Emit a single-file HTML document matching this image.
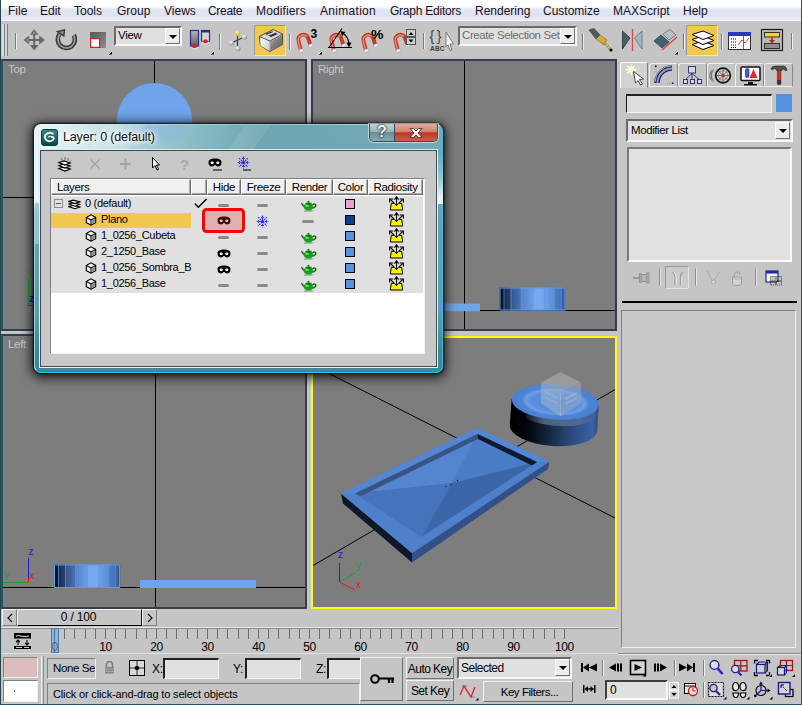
<!DOCTYPE html>
<html><head><meta charset="utf-8">
<style>
*{margin:0;padding:0;box-sizing:border-box}
html,body{width:802px;height:705px;overflow:hidden;background:#c5c5c5;font-family:"Liberation Sans",sans-serif;font-size:12px;color:#000}
.a{position:absolute}
#menubar{left:0;top:0;width:802px;height:20px;background:linear-gradient(#ffffff 0,#fbfcfe 35%,#e3e7f3 45%,#dde2f0 80%,#eef0f8 100%)}
#menubar span{position:absolute;top:4px;font-size:12px;color:#1a1020;white-space:nowrap}
#toolbar{left:0;top:20px;width:802px;height:39px;background:#c5c5c5;border-top:1px solid #f4f4f4}
.vp{background:#7d7d7d;border:2px solid #353d4e;overflow:hidden}
.vplabel{position:absolute;left:5px;top:2px;font-size:11.5px;letter-spacing:-0.3px;color:#c6c6c6}

.sunk{border:1px solid;border-color:#404040 #fff #fff #404040;background:#dcdcdc}
.raised{border:1px solid;border-color:#fff #6e6e6e #6e6e6e #fff;background:#c5c5c5}
.btn{border:1px solid;border-color:#f4f4f4 #707070 #707070 #f4f4f4;background:#c5c5c5;text-align:center;font-size:11px;white-space:nowrap}
.t11{font-size:11px;white-space:nowrap}
.sep{position:absolute;width:2px;border-left:1px solid #808080;border-right:1px solid #f0f0f0}
.tab{top:1px;width:29px;height:24px;border:1px solid;border-color:#f0f0f0 #8a8a8a #f0f0f0 #f0f0f0;border-radius:3px 3px 0 0;background:#c5c5c5}

#dlg{border-radius:7px;box-shadow:0 2px 11px 3px rgba(0,0,0,.78),0 0 2px 1px rgba(0,0,0,.8);background:linear-gradient(180deg,#76acb6 0,#74aab6 26px,#6aa4b0 90px,#5c9cab 190px,#3f8898 226px,#3f8898 100%);
 border:1px solid;border-color:#a8dce8 #30c4ec #22c2ec #b4dce6}
#dlg .lite{position:absolute;left:-1px;top:-1px;width:411px;height:120px;border-radius:7px 7px 0 0;background:linear-gradient(90deg,rgba(238,249,251,.97) 0,rgba(218,238,242,.92) 12%,rgba(165,208,216,.72) 32%,rgba(95,155,168,.35) 55%,rgba(70,135,150,0) 100%);-webkit-mask-image:linear-gradient(180deg,#000 0,#000 78px,rgba(0,0,0,.4) 80px,rgba(0,0,0,.3) 170px,transparent 235px);mask-image:linear-gradient(180deg,#000 0,#000 78px,rgba(0,0,0,.4) 80px,rgba(0,0,0,.3) 170px,transparent 235px)}
#dlg .glass{position:absolute;left:0;top:0;right:0;height:26px;border-radius:6px 6px 0 0;overflow:hidden}
#dlg .client{position:absolute;left:4px;top:24px;width:399px;height:219px;border:1px solid;border-color:#d8eef2 #e8f4f6 #e8f4f6 #e0f0f4}
#dlg .client>div{position:absolute;left:0;top:0;width:397px;height:217px;background:#c8c8c8;border:1px solid #3c4c54}
.hdr{position:absolute;top:0;height:16px;background:#f0f0f0;border:1px solid;border-color:#fff #6e6e6e #6e6e6e #fff;font-size:11.5px;text-align:center;line-height:14px;letter-spacing:-0.35px;box-shadow:inset -1px -1px 0 #a8a8a8}
.row{position:absolute;left:0;width:372px;height:16px}
.row span{position:absolute;top:-1px;font-size:11px;letter-spacing:-0.3px;white-space:nowrap;line-height:15px}
</style></head><body>
<div class="a" style="left:0;top:0;width:1px;height:705px;background:#24464e;z-index:9"></div>
<div class="a" style="left:800.5px;top:0;width:1.5px;height:705px;background:#2c5460;z-index:9"></div><div class="a" style="left:0;top:704px;width:802px;height:1px;background:#2c5460;z-index:9"></div>
<!-- MENUBAR -->
<div id="menubar" class="a">
<span style="left:8px">File</span><span style="left:40px">Edit</span><span style="left:74px">Tools</span><span style="left:117px">Group</span><span style="left:164px">Views</span><span style="left:208px;letter-spacing:-0.3px">Create</span><span style="left:256px;letter-spacing:0.13px">Modifiers</span><span style="left:320px;letter-spacing:0.3px">Animation</span><span style="left:390px;letter-spacing:-0.23px">Graph Editors</span><span style="left:475px">Rendering</span><span style="left:543px">Customize</span><span style="left:613px">MAXScript</span><span style="left:683px">Help</span>
</div>
<!-- TOOLBAR -->
<div id="toolbar" class="a">
 <div class="a" style="left:114px;top:5px;width:68px;height:20px;background:#e0e0e0;border:2px solid;border-color:#6a6a6a #f8f8f8 #f8f8f8 #6a6a6a"><span class="a" style="left:2px;top:1px;font-size:11.5px;letter-spacing:-0.3px">View</span>
  <div class="a" style="left:49px;top:0px;width:15px;height:16px;background:#ececec;border:1px solid;border-color:#fff #707070 #707070 #fff"><div class="a" style="left:3px;top:6px;border:4px solid transparent;border-top:4px solid #000;border-bottom:0"></div></div></div>
 <div class="a" style="left:458px;top:5px;width:119px;height:20px;background:#e0e0e0;border:2px solid;border-color:#6a6a6a #f8f8f8 #f8f8f8 #6a6a6a"><span class="a" style="left:2px;top:1px;font-size:11.5px;letter-spacing:-0.4px;color:#6e6e6e;white-space:nowrap">Create Selection Set</span>
  <div class="a" style="left:100px;top:0px;width:15px;height:16px;background:#ececec;border:1px solid;border-color:#fff #707070 #707070 #fff"><div class="a" style="left:3px;top:6px;border:4px solid transparent;border-top:4px solid #000;border-bottom:0"></div></div></div>
</div>
<svg class="a" style="left:0;top:0;z-index:2" width="802" height="60" id="tbsvg">
<defs>
<linearGradient id="gm" x1="0" y1="0" x2="1" y2="1"><stop offset="0" stop-color="#9a9a9a"/><stop offset="1" stop-color="#484848"/></linearGradient>
<linearGradient id="gs" x1="0" y1="0" x2="1" y2="1"><stop offset="0" stop-color="#585858"/><stop offset="1" stop-color="#8e8e8e"/></linearGradient>
<linearGradient id="bxl" x1="0" y1="0" x2="1" y2="1"><stop offset="0" stop-color="#fff"/><stop offset="1" stop-color="#c8c8c8"/></linearGradient><linearGradient id="bxr" x1="0" y1="0" x2="1" y2="1"><stop offset="0" stop-color="#a0a0a0"/><stop offset="1" stop-color="#585858"/></linearGradient><linearGradient id="rcl" x1="0" y1="0" x2="0" y2="1"><stop offset="0" stop-color="#b4b4b8"/><stop offset="1" stop-color="#585860"/></linearGradient><radialGradient id="ball" cx=".35" cy=".35" r=".7"><stop offset="0" stop-color="#fff"/><stop offset="1" stop-color="#8a8a8a"/></radialGradient>
<radialGradient id="yball" cx=".35" cy=".35" r=".7"><stop offset="0" stop-color="#fff8a0"/><stop offset="1" stop-color="#d8b800"/></radialGradient>
</defs>
<!-- gripper -->
<path d="M3 24 V56 M6 24 V56" stroke="#f4f4f4"/><path d="M4.5 24 V56 M7.4 24 V56" stroke="#777"/>
<path d="M15.5 33 V49" stroke="#7c7c7c"/><path d="M16.5 33 V49" stroke="#ececec"/>
<!-- move -->
<g fill="#666" stroke="none"><rect x="33.2" y="32" width="2" height="16"/><rect x="26" y="39" width="16.5" height="2"/><path d="M34.2 29.2 L38.6 34.8 H29.8 Z M34.2 50.6 L38.6 45 H29.8 Z M23.5 40 L29.2 35.6 V44.4 Z M44.9 40 L39.2 35.6 V44.4 Z"/></g><g fill="#8c8c8c"><path d="M34.2 31 L36.5 34 H32 Z M25.5 40 L28.4 37.8 V42.2 Z"/></g>
<!-- rotate -->
<path d="M73.8 35 A8.6 8.6 0 1 1 59.5 34.2" fill="none" stroke="#383838" stroke-width="4.6"/><path d="M73.6 35.3 A8.4 8.4 0 1 1 59.8 34.4" fill="none" stroke="#9c9c9c" stroke-width="1.7"/><path d="M55.8 31.3 L65.3 29 L64.4 37.2 Z" fill="#383838"/><path d="M59 32 L63.8 30.7 L63.3 34.5 Z" fill="#8a8a8a"/>
<!-- scale -->
<rect x="90" y="32" width="16" height="16" fill="url(#gs)"/><rect x="90.6" y="38.6" width="9" height="8.8" fill="#fff" stroke="#d82020" stroke-width="1.2"/>
<path d="M112 51 v3.5 h-3.5 z" fill="#000"/><path d="M108.5 54.5 l3.5 -3.5" stroke="#fff" stroke-width=".9"/>
<!-- ref coord pair -->
<rect x="190.5" y="30.5" width="8" height="16" fill="url(#rcl)" stroke="#283080" stroke-width="1.2"/><rect x="201.5" y="30.5" width="8" height="11" fill="#d4d4dc" stroke="#283080" stroke-width="1.2"/><rect x="201.5" y="30.5" width="8" height="2" fill="#283080"/><circle cx="194.5" cy="46" r="2.2" fill="#e02020"/><circle cx="205.5" cy="41.5" r="2.2" fill="#e02020"/><path d="M190.5 46.5 q4 5 8 0 M201.5 41.5 q4 5 8 0" fill="none" stroke="#e4e4ec" stroke-width="1.1"/>
<path d="M214 51 v3.5 h-3.5 z" fill="#000"/><path d="M210.5 54.5 l3.5 -3.5" stroke="#fff" stroke-width=".9"/>
<path d="M219.5 33 V49" stroke="#7c7c7c"/><path d="M220.5 33 V49" stroke="#ececec"/>
<!-- pivot -->
<path d="M237.5 33 V48 M231 43 L238 40 L244 37" stroke="#404040" stroke-width="1.2" fill="none"/><circle cx="237.5" cy="33" r="2.8" fill="url(#yball)"/><circle cx="231.5" cy="43" r="2.6" fill="url(#ball)"/><circle cx="244.5" cy="37" r="2.6" fill="url(#ball)"/><circle cx="238" cy="48.5" r="2.6" fill="url(#ball)"/>
<!-- select&manip highlighted -->
<rect x="254.5" y="25.5" width="31" height="30" fill="#f0c84c" stroke="#e4e4e4"/><path d="M254.5 55.5 V25.5 H285.5" fill="none" stroke="#9a9a9a"/>
<g transform="translate(271.5 40.5) scale(1.16) translate(-271.5 -40.5)"><path d="M261 37 L273 31 L281 35 L281 44 L270 50 L262 45 Z" fill="#d8d8d8" stroke="#404040" stroke-width=".8"/><path d="M261 37 L270 41 L281 35 M270 41 V50" fill="none" stroke="#404040" stroke-width=".8"/><path d="M262 38 L270 41.5 V49.5 L262 45 Z" fill="url(#bxl)"/><path d="M270.5 41.5 L280.5 36 V44 L270.5 49.5 Z" fill="url(#bxr)"/><path d="M266 35 L272 32.5 L277 35 L271 37.5 Z" fill="#303030"/><path d="M268 36 L274 33.5" stroke="#fff" stroke-width="1"/></g>
<path d="M289.5 33 V49" stroke="#7c7c7c"/><path d="M290.5 33 V49" stroke="#ececec"/>
<g transform="translate(296,33)"><path d="M5 17.5 L2.6 8.5 A5 5 0 0 1 12 4.8 L14.6 12.3" fill="none" stroke="#c8382a" stroke-width="3.9"/><path d="M4.3 16 L2.2 8.2 A5.3 5.3 0 0 1 11 3.5" fill="none" stroke="#f09080" stroke-width="1.3"/><rect x="3.3" y="16.3" width="3.8" height="2.6" fill="#fff" stroke="#999" stroke-width=".4" transform="rotate(-15 5 17.5)"/><rect x="12.9" y="11.2" width="3.8" height="2.6" fill="#fff" stroke="#999" stroke-width=".4" transform="rotate(-18 14.6 12.3)"/></g><text x="310.5" y="38" font-family="Liberation Sans" font-weight="bold" font-size="12">3</text>
<path d="M322 51 v3.5 h-3.5 z" fill="#000"/><path d="M318.5 54.5 l3.5 -3.5" stroke="#fff" stroke-width=".9"/>
<g transform="translate(329,33)"><path d="M5 17.5 L2.6 8.5 A5 5 0 0 1 12 4.8 L14.6 12.3" fill="none" stroke="#c8382a" stroke-width="3.9"/><path d="M4.3 16 L2.2 8.2 A5.3 5.3 0 0 1 11 3.5" fill="none" stroke="#f09080" stroke-width="1.3"/><rect x="3.3" y="16.3" width="3.8" height="2.6" fill="#fff" stroke="#999" stroke-width=".4" transform="rotate(-15 5 17.5)"/><rect x="12.9" y="11.2" width="3.8" height="2.6" fill="#fff" stroke="#999" stroke-width=".4" transform="rotate(-18 14.6 12.3)"/></g><path d="M328 47.5 H352 M329 47.5 L342 28.5" stroke="#000" stroke-width="1.1" fill="none"/><path d="M342 32.5 Q349 37 349 45" fill="none" stroke="#000" stroke-width="1.1"/><path d="M340 31 L345.5 32 L342.3 36 Z M346.5 42.5 L351.5 42.5 L349 47.5 Z" fill="#000"/>
<g transform="translate(361,33)"><path d="M5 17.5 L2.6 8.5 A5 5 0 0 1 12 4.8 L14.6 12.3" fill="none" stroke="#c8382a" stroke-width="3.9"/><path d="M4.3 16 L2.2 8.2 A5.3 5.3 0 0 1 11 3.5" fill="none" stroke="#f09080" stroke-width="1.3"/><rect x="3.3" y="16.3" width="3.8" height="2.6" fill="#fff" stroke="#999" stroke-width=".4" transform="rotate(-15 5 17.5)"/><rect x="12.9" y="11.2" width="3.8" height="2.6" fill="#fff" stroke="#999" stroke-width=".4" transform="rotate(-18 14.6 12.3)"/></g><text x="371" y="38.5" font-family="Liberation Sans" font-weight="bold" font-size="12.5" textLength="12.5" lengthAdjust="spacingAndGlyphs">%</text>
<g transform="translate(393,33)"><path d="M5 17.5 L2.6 8.5 A5 5 0 0 1 12 4.8 L14.6 12.3" fill="none" stroke="#c8382a" stroke-width="3.9"/><path d="M4.3 16 L2.2 8.2 A5.3 5.3 0 0 1 11 3.5" fill="none" stroke="#f09080" stroke-width="1.3"/><rect x="3.3" y="16.3" width="3.8" height="2.6" fill="#fff" stroke="#999" stroke-width=".4" transform="rotate(-15 5 17.5)"/><rect x="12.9" y="11.2" width="3.8" height="2.6" fill="#fff" stroke="#999" stroke-width=".4" transform="rotate(-18 14.6 12.3)"/></g><rect x="406.5" y="29.5" width="9" height="7" fill="#d0d0d0" stroke="#555"/><rect x="406.5" y="37.5" width="9" height="7" fill="#d0d0d0" stroke="#555"/><path d="M408.5 35 L411 32 L413.5 35 Z M408.5 39.5 L411 42.5 L413.5 39.5 Z" fill="#000"/>
<path d="M423.5 33 V49" stroke="#7c7c7c"/><path d="M424.5 33 V49" stroke="#ececec"/>
<!-- {} ABC -->
<text x="429.5" y="41" font-family="Liberation Sans" font-size="14.5" fill="#484848" letter-spacing="-0.8">{ }</text><text x="430" y="51" font-family="Liberation Sans" font-weight="bold" font-size="6.5" fill="#404040" letter-spacing=".2">ABC</text>
<!-- cursor -->
<path d="M446 32 L453.5 44 L450 44 L452 50 L450 50.5 L448 45 L446 47 Z" fill="#f4f4f4" stroke="#7a7a7a" stroke-width="1"/>
<path d="M582.5 33 V49" stroke="#7c7c7c"/><path d="M583.5 33 V49" stroke="#ececec"/>
<!-- light lister / flashlight -->
<path d="M589 30 L594 28.5 L600 35 L596 39 Z" fill="#505860" stroke="#303030" stroke-width=".6"/><path d="M596 39 L600 35 L607 40 L604 45 Z" fill="#d8a838" stroke="#705010" stroke-width=".5"/><path d="M604 42 L610 49" stroke="#b89030" stroke-width="3" stroke-dasharray="1.5 1"/><circle cx="611" cy="50" r="1.6" fill="#000"/>
<!-- mirror -->
<path d="M622.5 31 L630 38 L622.5 49 Z" fill="#4a6068" stroke="#203038" stroke-width=".8"/><path d="M642 31 L634.5 38 L642 49 Z" fill="#a8b4bc" stroke="#607078" stroke-width=".8"/><path d="M632.5 29 V51" stroke="#e04848" stroke-width="1.3"/>
<!-- align -->
<path d="M654 41 L661 35 L669 42 L662 48 Z" fill="#3e6470" stroke="#203840" stroke-width=".7"/><path d="M663 34 L670 29.5 L676 35 L669 40 Z" fill="#b8c0cc" stroke="#506070" stroke-width=".7"/><path d="M662 50 L677 37" stroke="#e04040" stroke-width="1.4"/>
<path d="M678 51 v3.5 h-3.5 z" fill="#000"/><path d="M674.5 54.5 l3.5 -3.5" stroke="#fff" stroke-width=".9"/>
<path d="M683.5 33 V49" stroke="#7c7c7c"/><path d="M684.5 33 V49" stroke="#ececec"/>
<!-- layers highlighted -->
<rect x="686.5" y="25.5" width="31" height="30" fill="#f0c84c" stroke="#e4e4e4"/><path d="M686.5 55.5 V25.5 H717.5" fill="none" stroke="#9a9a9a"/>
<g fill="#fff" stroke="#000" stroke-width="1"><path d="M692 44.5 L703 41 L714 45.5 L703 49.5 Z"/><path d="M692 39.5 L703 36 L714 40.5 L703 44.5 Z"/><path d="M692 34.5 L703 31 L714 35.5 L703 39.5 Z"/></g>
<path d="M721.5 33 V49" stroke="#7c7c7c"/><path d="M722.5 33 V49" stroke="#ececec"/>
<!-- curve editor -->
<rect x="728.5" y="32.5" width="22" height="17" fill="#fff" stroke="#303030"/><rect x="728.5" y="32.5" width="22" height="3" fill="#2838c0" stroke="#2838c0"/><path d="M731 39 H736 M731 42 H736 M731 45 H736 M731 47.5 H736" stroke="#000" stroke-width="1" stroke-dasharray="1 1"/><path d="M738 45 L742 40 L745 43 L749 38" fill="none" stroke="#d04040" stroke-width="1"/><path d="M743.5 36 V49" stroke="#20a020"/>
<!-- schematic -->
<rect x="761.5" y="29.5" width="21" height="21" fill="#b8b8b8" stroke="#202020" stroke-width="1.2"/><rect x="764.5" y="32.5" width="15" height="4.5" fill="#f0d820" stroke="#303030"/><rect x="764.5" y="43.5" width="15" height="5" fill="#909090" stroke="#303030"/><path d="M772 37 V41" stroke="#c02020" stroke-width="1.6"/><path d="M769 40 H775 L772 43.5 Z" fill="#c02020"/>
<path d="M791.5 33 V49" stroke="#7c7c7c"/><path d="M792.5 33 V49" stroke="#ececec"/>
</svg>
<!-- VIEWPORTS -->
<div id="vtop" class="a vp" style="left:1px;top:59px;width:306px;height:272px;border-left-color:#2c5562"><svg class="a" style="left:0;top:0" width="302" height="268" viewBox="3 61 302 268">
<path d="M154.5 61 V329 M3 197.5 H305" stroke="#000" stroke-width="1"/>
<circle cx="154.5" cy="120.7" r="37.7" fill="#6fa3ea"/>
<path d="M28.5 278 V305" stroke="#20a020" stroke-width="1"/><text x="28" y="276" font-family="Liberation Sans" font-size="10" fill="#20a020">y</text><text x="29" y="302" font-family="Liberation Sans" font-size="10" font-weight="bold" fill="#2020d0">z</text><path d="M28 305.5 H34" stroke="#d02020"/>
</svg><div class="vplabel">Top</div></div>
<div id="vright" class="a vp" style="left:311px;top:59px;width:306px;height:272px"><svg class="a" style="left:0;top:0" width="302" height="268" viewBox="313 61 302 268">
<path d="M464.5 61 V329 M313 310.5 H615" stroke="#000" stroke-width="1"/>
<rect x="400" y="303.5" width="80" height="7.7" fill="#6ea4ea"/>
<defs><linearGradient id="cr0" x1="0" x2="1" y1="0" y2="0"><stop offset="0" stop-color="#080e18"/><stop offset="1" stop-color="#0e1624"/></linearGradient><linearGradient id="cr1" x1="0" x2="1" y1="0" y2="0"><stop offset="0" stop-color="#1a2a48"/><stop offset="1" stop-color="#2c4470"/></linearGradient><linearGradient id="cr2" x1="0" x2="1" y1="0" y2="0"><stop offset="0" stop-color="#34558c"/><stop offset="1" stop-color="#4a72b6"/></linearGradient><linearGradient id="cr3" x1="0" x2="1" y1="0" y2="0"><stop offset="0" stop-color="#5682c8"/><stop offset="1" stop-color="#6c9ee6"/></linearGradient><linearGradient id="cr4" x1="0" x2="1" y1="0" y2="0"><stop offset="0" stop-color="#74a8f0"/><stop offset="1" stop-color="#74a8f0"/></linearGradient><linearGradient id="cr5" x1="0" x2="1" y1="0" y2="0"><stop offset="0" stop-color="#6ca0e8"/><stop offset="1" stop-color="#5a8cd6"/></linearGradient><linearGradient id="cr6" x1="0" x2="1" y1="0" y2="0"><stop offset="0" stop-color="#507ec4"/><stop offset="1" stop-color="#4470b2"/></linearGradient><linearGradient id="cr7" x1="0" x2="1" y1="0" y2="0"><stop offset="0" stop-color="#3c629e"/><stop offset="1" stop-color="#385a94"/></linearGradient></defs><rect x="499.50" y="287.5" width="4.70" height="23.0" fill="url(#cr0)"/><rect x="504.00" y="287.5" width="7.33" height="23.0" fill="url(#cr1)"/><rect x="511.12" y="287.5" width="10.20" height="23.0" fill="url(#cr2)"/><rect x="521.12" y="287.5" width="12.07" height="23.0" fill="url(#cr3)"/><rect x="533.00" y="287.5" width="11.45" height="23.0" fill="url(#cr4)"/><rect x="544.25" y="287.5" width="10.20" height="23.0" fill="url(#cr5)"/><rect x="554.25" y="287.5" width="7.08" height="23.0" fill="url(#cr6)"/><rect x="561.12" y="287.5" width="4.58" height="23.0" fill="url(#cr7)"/><path d="M504.00 287.5 V310.5" stroke="#5a96ec" stroke-width=".7"/><path d="M511.12 287.5 V310.5" stroke="#5a96ec" stroke-width=".7"/><path d="M521.12 287.5 V310.5" stroke="#5a96ec" stroke-width=".7"/><path d="M533.00 287.5 V310.5" stroke="#5a96ec" stroke-width=".7"/><path d="M544.25 287.5 V310.5" stroke="#5a96ec" stroke-width=".7"/><path d="M554.25 287.5 V310.5" stroke="#5a96ec" stroke-width=".7"/><path d="M561.12 287.5 V310.5" stroke="#5a96ec" stroke-width=".7"/><rect x="500.0" y="288.0" width="65.0" height="22.0" fill="none" stroke="#5a9af0" stroke-width="1"/>
</svg><div class="vplabel">Right</div></div>
<div id="vleft" class="a vp" style="left:1px;top:334px;width:306px;height:275px;border-left-color:#2c5562"><svg class="a" style="left:0;top:0" width="302" height="271" viewBox="3 336 302 271">
<path d="M155.5 336 V607 M3 587.5 H305" stroke="#000" stroke-width="1"/>
<rect x="140" y="580" width="116" height="8" fill="#6fa4ec"/>
<defs><linearGradient id="cl0" x1="0" x2="1" y1="0" y2="0"><stop offset="0" stop-color="#080e18"/><stop offset="1" stop-color="#0e1624"/></linearGradient><linearGradient id="cl1" x1="0" x2="1" y1="0" y2="0"><stop offset="0" stop-color="#1a2a48"/><stop offset="1" stop-color="#2c4470"/></linearGradient><linearGradient id="cl2" x1="0" x2="1" y1="0" y2="0"><stop offset="0" stop-color="#34558c"/><stop offset="1" stop-color="#4a72b6"/></linearGradient><linearGradient id="cl3" x1="0" x2="1" y1="0" y2="0"><stop offset="0" stop-color="#5682c8"/><stop offset="1" stop-color="#6c9ee6"/></linearGradient><linearGradient id="cl4" x1="0" x2="1" y1="0" y2="0"><stop offset="0" stop-color="#74a8f0"/><stop offset="1" stop-color="#74a8f0"/></linearGradient><linearGradient id="cl5" x1="0" x2="1" y1="0" y2="0"><stop offset="0" stop-color="#6ca0e8"/><stop offset="1" stop-color="#5a8cd6"/></linearGradient><linearGradient id="cl6" x1="0" x2="1" y1="0" y2="0"><stop offset="0" stop-color="#507ec4"/><stop offset="1" stop-color="#4470b2"/></linearGradient><linearGradient id="cl7" x1="0" x2="1" y1="0" y2="0"><stop offset="0" stop-color="#3c629e"/><stop offset="1" stop-color="#385a94"/></linearGradient></defs><rect x="54.00" y="564.5" width="4.70" height="23.5" fill="url(#cl0)"/><rect x="58.50" y="564.5" width="7.33" height="23.5" fill="url(#cl1)"/><rect x="65.62" y="564.5" width="10.20" height="23.5" fill="url(#cl2)"/><rect x="75.62" y="564.5" width="12.07" height="23.5" fill="url(#cl3)"/><rect x="87.50" y="564.5" width="11.45" height="23.5" fill="url(#cl4)"/><rect x="98.75" y="564.5" width="10.20" height="23.5" fill="url(#cl5)"/><rect x="108.75" y="564.5" width="7.08" height="23.5" fill="url(#cl6)"/><rect x="115.62" y="564.5" width="4.58" height="23.5" fill="url(#cl7)"/><path d="M58.50 564.5 V588" stroke="#5a96ec" stroke-width=".7"/><path d="M65.62 564.5 V588" stroke="#5a96ec" stroke-width=".7"/><path d="M75.62 564.5 V588" stroke="#5a96ec" stroke-width=".7"/><path d="M87.50 564.5 V588" stroke="#5a96ec" stroke-width=".7"/><path d="M98.75 564.5 V588" stroke="#5a96ec" stroke-width=".7"/><path d="M108.75 564.5 V588" stroke="#5a96ec" stroke-width=".7"/><path d="M115.62 564.5 V588" stroke="#5a96ec" stroke-width=".7"/><rect x="54.5" y="565.0" width="65" height="22.5" fill="none" stroke="#5a9af0" stroke-width="1"/>
<path d="M28.5 558 V582.5" stroke="#2020d0"/><path d="M3 582.5 H28.5" stroke="#20a020"/><path d="M28.5 578 v5" stroke="#d02020"/>
<text x="28.5" y="555" font-family="Liberation Sans" font-size="10" fill="#2020d0">z</text>
<text x="4" y="578" font-family="Liberation Sans" font-size="10" fill="#20a020">y</text>
<text x="29.5" y="579" font-family="Liberation Sans" font-size="10" fill="#d02020">x</text>
</svg><div class="vplabel">Left</div></div>
<div id="vpersp" class="a vp" style="left:311px;top:336px;width:306px;height:273px;border-color:#ffff00"><svg class="a" style="left:0;top:0" width="302" height="269" viewBox="313 338 302 269">
<defs>
<linearGradient id="bandg" x1="0" y1="0" x2="1" y2="0"><stop offset="0" stop-color="#506880" stop-opacity=".1"/><stop offset=".3" stop-color="#60788e" stop-opacity=".75"/><stop offset=".8" stop-color="#5c7698" stop-opacity=".7"/><stop offset="1" stop-color="#4868a0" stop-opacity=".2"/></linearGradient><linearGradient id="cb" x1="0" y1="0" x2="1" y2="0"><stop offset="0" stop-color="#000"/><stop offset=".2" stop-color="#03050a"/><stop offset=".38" stop-color="#101c30"/><stop offset=".6" stop-color="#223c66"/><stop offset=".85" stop-color="#345896"/><stop offset=".95" stop-color="#3a62a4"/><stop offset="1" stop-color="#2e4f86"/></linearGradient>
<radialGradient id="ct" cx=".5" cy=".5" r=".5"><stop offset="0" stop-color="#5088d8"/><stop offset=".55" stop-color="#5a90de"/><stop offset=".68" stop-color="#6c9ee4"/><stop offset=".78" stop-color="#4e84d4"/><stop offset="1" stop-color="#4a80d0"/></radialGradient>
</defs>
<!-- grid lines -->
<path d="M328 373 L619 520" stroke="#000" stroke-width="1"/>
<path d="M310 567.3 L618 387.8" stroke="#000" stroke-width="1"/>
<!-- cylinder -->
<g transform="rotate(4 555 402)">
<path d="M511.5 402 V428 A43.7 18 0 0 0 599 428 V402 Z" fill="url(#cb)"/>
<path d="M524 412 A43.7 17.6 0 0 0 596 409 L594 418 A43.7 17.6 0 0 1 528 421 Z" fill="url(#bandg)"/>
<ellipse cx="555.3" cy="402" rx="43.7" ry="17.6" fill="url(#ct)"/>
</g>
<!-- ghost cube -->
<g opacity=".55"><path d="M560.5 372 L581 382.5 L560.5 392.5 L541 382.5 Z" fill="#b4b4b4"/><path d="M541 382.5 L560.5 392.5 V416 L541 403.5 Z" fill="#a4b4cc"/><path d="M581 382.5 L560.5 392.5 V416 L581 403.5 Z" fill="#98a8c4"/><path d="M560.5 392.5 V416" stroke="#c8c8c8" stroke-width="1"/><path d="M545 392 L557 398 M545 397 L557 403 M565 399 L577 393 M565 404 L577 398" stroke="#b8c4d8" stroke-width="2"/></g>
<!-- tray -->
<path d="M341 493.5 L412 553 V562.5 L343 503.5 Z" fill="#0e1828"/>
<path d="M412 553 L549.5 461.5 L548 469 L412 562.5 Z" fill="#32508a"/>
<path d="M341 493.5 L477 428 L549.5 461.5 L412 553 Z" fill="#4e80cc"/><path d="M341 493.5 L477 428 L549.5 461.5 L537 462 L477.5 434 L355 493.5 Z" fill="#5486d2"/>
<!-- interior -->
<path d="M355 493.5 L477.5 434 L537 462 L421 537 Z" fill="#4a7ac4"/>
<path d="M355 493.5 L477.5 434 L452 483 Z" fill="#5486d0"/>
<path d="M477.5 434 L537 462 L452 483 Z" fill="#4a7cc8"/>
<path d="M452 483 L537 462 L421 537 Z" fill="#3c66a8"/>
<path d="M355 493.5 L452 483 L421 537 Z" fill="#4674bc"/>
<path d="M355 493.5 L477.5 434 L478 439 L361 496 Z" fill="#385484"/>
<path d="M477.5 434 L537 462 L532 465.5 L478 439 Z" fill="#0e1a32"/>
<circle cx="446" cy="486.5" r=".7" fill="#102040"/><circle cx="451" cy="484.5" r=".7" fill="#102040"/><circle cx="457.5" cy="480.5" r=".7" fill="#102040"/>
<!-- axis -->
<path d="M339.5 582 V563" stroke="#2020e0"/><path d="M339.5 582 L355 573" stroke="#20a020"/><path d="M339.5 582 L355 590" stroke="#e02020"/>
<text x="338" y="558" font-family="Liberation Sans" font-size="10" fill="#2020e0">z</text><text x="356" y="569" font-family="Liberation Sans" font-size="10" fill="#20a020">y</text><text x="356" y="588" font-family="Liberation Sans" font-size="10" fill="#e02020">x</text>
</svg></div>
<!-- RIGHT PANEL -->
<div id="rpanel" class="a" style="left:618px;top:59px;width:184px;height:596px;background:#c5c5c5;z-index:3">
 <!-- tabs -->
 <div class="a" style="left:0;top:3px;width:184px;height:26px" id="tabs">
  <div class="a" style="left:2px;top:0;width:28px;height:26px;background:#d2d2d2;border:1px solid;border-color:#fff #808080 #d2d2d2 #fff;border-radius:3px 3px 0 0"></div>
  <div class="a tab" style="left:31px"></div><div class="a tab" style="left:60px"></div><div class="a tab" style="left:89px"></div><div class="a tab" style="left:117px"></div><div class="a tab" style="left:146px"></div>
 </div>
 <div class="a" style="left:8px;top:35px;width:146px;height:19px;background:#dcdcdc;border:1px solid;border-color:#202020 #f4f4f4 #f4f4f4 #202020;border-top-width:2px"></div>
 <div class="a" style="left:158px;top:35px;width:16px;height:18px;background:#5890e0"></div>
 <div class="a" style="left:8px;top:60px;width:167px;height:23px;background:#e0e0e0;border:2px solid;border-color:#6a6a6a #f8f8f8 #f8f8f8 #6a6a6a"><span class="a t11" style="left:3px;top:3px;font-size:11.5px;letter-spacing:-0.4px">Modifier List</span>
  <div class="a" style="left:147px;top:1px;width:15px;height:17px;background:#ececec;border:1px solid;border-color:#fff #707070 #707070 #fff"><div class="a" style="left:3px;top:6px;border:4px solid transparent;border-top:4px solid #000;border-bottom:0"></div></div></div>
 <div class="a" style="left:9px;top:88px;width:165px;height:115px;background:#e1e1e1;border:2px solid;border-color:#7a7a7a #fafafa #fafafa #7a7a7a"></div>
<svg class="a" style="left:0;top:0" width="184" height="32" viewBox="618 59 184 32">
<defs><linearGradient id="arcg" x1="0" y1="0" x2="1" y2="1"><stop offset="0" stop-color="#8090c0"/><stop offset="1" stop-color="#182050"/></linearGradient></defs>
<!-- 1 create -->
<g stroke="#fffff0" stroke-width="1.2"><path d="M631 64.5 V75 M625.5 69.7 H636.5 M627.3 66 L634.7 73.4 M634.7 66 L627.3 73.4"/></g><circle cx="631" cy="69.7" r="2.2" fill="#fff"/><circle cx="631" cy="69.7" r="3.5" fill="#ffff90" opacity=".5"/>
<path d="M633.5 71.5 L643.5 79 L639.5 79.5 L642.5 84 L640.5 85 L638 80.5 L635.5 83 Z" fill="#fff" stroke="#303030" stroke-width=".9"/>
<!-- 2 modify -->
<path d="M657 83 A15 15 0 0 1 672 68" fill="none" stroke="#1c2858" stroke-width="5.5"/><path d="M657.5 83 A14.5 14.5 0 0 1 672 68.5" fill="none" stroke="#8c9cd0" stroke-width="1.8"/><path d="M655 82 A17 17 0 0 1 671.5 65.8" fill="none" stroke="#c8d0e8" stroke-width=".8"/>
<rect x="655" y="65.5" width="1.5" height="1.5" fill="#000"/><rect x="672" y="82.5" width="1.5" height="1.5" fill="#000"/><path d="M656 67 V72 M667 83.2 H672" stroke="#606060" stroke-width=".5" stroke-dasharray="1 1"/>
<!-- 3 hierarchy -->
<g fill="#d4d4ec" stroke="#383878" stroke-width="1"><rect x="688.5" y="66.5" width="7" height="6.5"/><rect x="683.5" y="79.5" width="4" height="4"/><rect x="690.5" y="79.5" width="4" height="4"/><rect x="697.5" y="79.5" width="4" height="4"/></g><path d="M692 73 V79.5 M692 73.5 L685.5 79.5 M692 73.5 L699.5 79.5" fill="none" stroke="#383878" stroke-width="1"/>
<!-- 4 motion -->
<circle cx="723" cy="75.5" r="7.3" fill="#d8d8d8" stroke="#101010" stroke-width="1.7"/><path d="M723 68.5 V82.5 M716 75.5 H730 M718 70.5 L728 80.5 M728 70.5 L718 80.5" stroke="#404040" stroke-width=".7"/><circle cx="723" cy="75.5" r="4.8" fill="none" stroke="#606060" stroke-width=".6"/><circle cx="723" cy="75.5" r="1.7" fill="#e02020"/>
<path d="M713.5 69.5 A9.5 9.5 0 0 0 713.5 81.5 M711.5 70.5 A9 9 0 0 0 711.5 80.5" fill="none" stroke="#505050" stroke-width=".8"/>
<!-- 5 display -->
<rect x="741" y="67" width="19" height="13.5" rx="1" fill="#fff" stroke="#101010" stroke-width="1.5"/><rect x="745.5" y="68.5" width="3.5" height="9" rx="1.5" fill="#4060d0" stroke="#102080" stroke-width=".6"/><path d="M753.5 69 L757.5 78 H749.5 Z" fill="#e02828"/><path d="M748 82 H753 V84 H757 V85.5 H744 V84 H748 Z" fill="#101010"/>
<!-- 6 utilities -->
<path d="M771 69 Q772 65.5 776 66 L784 66 Q786.5 66.5 787 70.5 L785 70.5 Q784.5 69 783 69 L782 70.5 H776.5 L775.5 68.5 Q773 68.5 772.5 70 Z" fill="#505050" stroke="#202020" stroke-width=".6"/><rect x="777.3" y="70.5" width="3.6" height="14" rx="1" fill="#c83020" stroke="#601810" stroke-width=".5"/><rect x="777.3" y="80" width="3.6" height="4.5" rx="1" fill="#303030"/>
</svg>
 <!-- stack buttons -->
 <svg class="a" style="left:0;top:205px" width="184" height="28" viewBox="618 264 184 28">
<!-- pin -->
<g fill="#b4b4b4" stroke="#8c8c8c" stroke-width=".8"><path d="M633 278 H641" fill="none" stroke-width="1.6"/><rect x="641" y="274.5" width="6" height="7"/><rect x="647" y="273" width="2" height="10"/><rect x="639.5" y="273.5" width="1.5" height="9"/></g>
<path d="M659.5 268.5 V285.5 M695.5 268.5 V285.5 M755.5 268.5 V285.5" stroke="#8c8c8c"/><path d="M660.5 268.5 V285.5 M696.5 268.5 V285.5 M756.5 268.5 V285.5" stroke="#e8e8e8"/>
<rect x="665.5" y="266.5" width="23" height="22" fill="#cacaca" stroke="#9a9a9a"/><path d="M665.5 288.5 H688.5 V266.5" fill="none" stroke="#e4e4e4"/>
<path d="M672.5 272 Q675 274 675 277 V285 M683 272 Q680.5 274 680.5 277 V285" fill="none" stroke="#9c9c9c" stroke-width="1.3"/><path d="M673.8 272 Q676.2 274 676.2 277 V285 M681.8 277 V285" fill="none" stroke="#f0f0f0" stroke-width=".8"/>
<!-- V -->
<path d="M707 271 L713 282 L720 271" fill="none" stroke="#a0a0a0" stroke-width="1" stroke-dasharray="1.5 .8"/><circle cx="713.5" cy="282" r="2" fill="#d8d8d8" stroke="#a0a0a0" stroke-width=".8"/>
<!-- bucket -->
<path d="M732.5 277 H741.5 V283 Q741.5 285.5 737 285.5 Q732.5 285.5 732.5 283 Z" fill="#d4d4d4" stroke="#a0a0a0"/><path d="M734 277 Q734 272 737.5 272 Q740 272 740 275" fill="none" stroke="#a0a0a0"/><path d="M733 279 H741" stroke="#a0a0a0" stroke-width=".7"/>
<!-- config -->
<rect x="766" y="271" width="12" height="11" fill="#f4f4f4" stroke="#1828a0" stroke-width="1.2"/><rect x="766" y="271" width="12" height="2.5" fill="#1828a0"/><g fill="none" stroke="#202020" stroke-width=".9" stroke-dasharray="1 1"><rect x="770.5" y="276.5" width="5" height="4"/><rect x="776.5" y="276.5" width="5" height="4"/><rect x="770.5" y="281.5" width="5" height="3.5"/><rect x="776.5" y="281.5" width="5" height="3.5"/></g><rect x="771" y="277" width="4" height="3" fill="#c0c0c0"/><rect x="777" y="282" width="4" height="2.5" fill="#c0c0c0"/>
</svg>
 <div class="a" style="left:4px;top:242px;width:175px;height:2px;background:#000"></div>
 <div class="a" style="left:3px;top:251px;width:175px;height:338px;border:1px solid;border-color:#808080 #f0f0f0 #f0f0f0 #808080;background:#c8c8c8"></div><div class="a" style="left:0;top:594px;width:184px;height:2px;border-top:1px solid #8c8c8c;border-bottom:1px solid #ececec"></div>
</div>
<!-- BOTTOM -->
<div id="bottom" class="a" style="left:0;top:609px;width:802px;height:96px;background:#c5c5c5">
 <!-- time slider -->
 <div class="a btn" style="left:2px;top:0px;width:15px;height:17px;border-color:#f4f4f4 #808080 #808080 #f4f4f4"><svg class="a" style="left:3px;top:3px" width="8" height="10"><path d="M6 1 L2 5 L6 9" fill="none" stroke="#000" stroke-width="1.1"/></svg></div>
 <div class="a btn" style="left:17px;top:0px;width:125px;height:17px;border-color:#f4f4f4 #101010 #000 #f4f4f4;border-bottom-width:1.5px;font-size:12px;line-height:15px;letter-spacing:-0.2px;padding-right:2px">0 / 100</div>
 <div class="a btn" style="left:142px;top:0px;width:15px;height:17px;border-color:#f4f4f4 #808080 #808080 #f4f4f4"><svg class="a" style="left:3px;top:3px" width="8" height="10"><path d="M2 1 L6 5 L2 9" fill="none" stroke="#000" stroke-width="1.1"/></svg></div>
 <!-- trackbar -->
 <div class="a" style="left:0;top:18px;width:618px;height:27px;border-top:1px solid #e8e8e8;border-bottom:1px solid #e0e0e0" id="track"><div class="a" style="left:0;top:0;width:618px;height:1px;background:#8a8a8a"></div>
  <div class="a" style="left:54.0px;top:1px;width:1px;height:10px;background:#6a6a6a"></div><div class="a" style="left:64.2px;top:1px;width:1px;height:10px;background:#6a6a6a"></div><div class="a" style="left:74.4px;top:1px;width:1px;height:10px;background:#6a6a6a"></div><div class="a" style="left:84.6px;top:1px;width:1px;height:10px;background:#6a6a6a"></div><div class="a" style="left:94.8px;top:1px;width:1px;height:10px;background:#6a6a6a"></div><div class="a" style="left:105.0px;top:1px;width:1px;height:10px;background:#6a6a6a"></div><div class="a" style="left:115.2px;top:1px;width:1px;height:10px;background:#6a6a6a"></div><div class="a" style="left:125.4px;top:1px;width:1px;height:10px;background:#6a6a6a"></div><div class="a" style="left:135.6px;top:1px;width:1px;height:10px;background:#6a6a6a"></div><div class="a" style="left:145.8px;top:1px;width:1px;height:10px;background:#6a6a6a"></div><div class="a" style="left:156.0px;top:1px;width:1px;height:10px;background:#6a6a6a"></div><div class="a" style="left:166.2px;top:1px;width:1px;height:10px;background:#6a6a6a"></div><div class="a" style="left:176.4px;top:1px;width:1px;height:10px;background:#6a6a6a"></div><div class="a" style="left:186.6px;top:1px;width:1px;height:10px;background:#6a6a6a"></div><div class="a" style="left:196.8px;top:1px;width:1px;height:10px;background:#6a6a6a"></div><div class="a" style="left:207.0px;top:1px;width:1px;height:10px;background:#6a6a6a"></div><div class="a" style="left:217.2px;top:1px;width:1px;height:10px;background:#6a6a6a"></div><div class="a" style="left:227.4px;top:1px;width:1px;height:10px;background:#6a6a6a"></div><div class="a" style="left:237.6px;top:1px;width:1px;height:10px;background:#6a6a6a"></div><div class="a" style="left:247.8px;top:1px;width:1px;height:10px;background:#6a6a6a"></div><div class="a" style="left:258.0px;top:1px;width:1px;height:10px;background:#6a6a6a"></div><div class="a" style="left:268.2px;top:1px;width:1px;height:10px;background:#6a6a6a"></div><div class="a" style="left:278.4px;top:1px;width:1px;height:10px;background:#6a6a6a"></div><div class="a" style="left:288.6px;top:1px;width:1px;height:10px;background:#6a6a6a"></div><div class="a" style="left:298.8px;top:1px;width:1px;height:10px;background:#6a6a6a"></div><div class="a" style="left:309.0px;top:1px;width:1px;height:10px;background:#6a6a6a"></div><div class="a" style="left:319.2px;top:1px;width:1px;height:10px;background:#6a6a6a"></div><div class="a" style="left:329.4px;top:1px;width:1px;height:10px;background:#6a6a6a"></div><div class="a" style="left:339.6px;top:1px;width:1px;height:10px;background:#6a6a6a"></div><div class="a" style="left:349.8px;top:1px;width:1px;height:10px;background:#6a6a6a"></div><div class="a" style="left:360.0px;top:1px;width:1px;height:10px;background:#6a6a6a"></div><div class="a" style="left:370.2px;top:1px;width:1px;height:10px;background:#6a6a6a"></div><div class="a" style="left:380.4px;top:1px;width:1px;height:10px;background:#6a6a6a"></div><div class="a" style="left:390.6px;top:1px;width:1px;height:10px;background:#6a6a6a"></div><div class="a" style="left:400.8px;top:1px;width:1px;height:10px;background:#6a6a6a"></div><div class="a" style="left:411.0px;top:1px;width:1px;height:10px;background:#6a6a6a"></div><div class="a" style="left:421.2px;top:1px;width:1px;height:10px;background:#6a6a6a"></div><div class="a" style="left:431.4px;top:1px;width:1px;height:10px;background:#6a6a6a"></div><div class="a" style="left:441.6px;top:1px;width:1px;height:10px;background:#6a6a6a"></div><div class="a" style="left:451.8px;top:1px;width:1px;height:10px;background:#6a6a6a"></div><div class="a" style="left:462.0px;top:1px;width:1px;height:10px;background:#6a6a6a"></div><div class="a" style="left:472.2px;top:1px;width:1px;height:10px;background:#6a6a6a"></div><div class="a" style="left:482.4px;top:1px;width:1px;height:10px;background:#6a6a6a"></div><div class="a" style="left:492.6px;top:1px;width:1px;height:10px;background:#6a6a6a"></div><div class="a" style="left:502.8px;top:1px;width:1px;height:10px;background:#6a6a6a"></div><div class="a" style="left:513.0px;top:1px;width:1px;height:10px;background:#6a6a6a"></div><div class="a" style="left:523.2px;top:1px;width:1px;height:10px;background:#6a6a6a"></div><div class="a" style="left:533.4px;top:1px;width:1px;height:10px;background:#6a6a6a"></div><div class="a" style="left:543.6px;top:1px;width:1px;height:10px;background:#6a6a6a"></div><div class="a" style="left:553.8px;top:1px;width:1px;height:10px;background:#6a6a6a"></div><div class="a" style="left:564.0px;top:1px;width:1px;height:10px;background:#6a6a6a"></div><span class="a" style="left:51.4px;top:12px;font-size:12px;letter-spacing:-0.4px">0</span><span class="a" style="left:99.2px;top:12px;font-size:12px;letter-spacing:-0.4px">10</span><span class="a" style="left:150.2px;top:12px;font-size:12px;letter-spacing:-0.4px">20</span><span class="a" style="left:201.2px;top:12px;font-size:12px;letter-spacing:-0.4px">30</span><span class="a" style="left:252.2px;top:12px;font-size:12px;letter-spacing:-0.4px">40</span><span class="a" style="left:303.2px;top:12px;font-size:12px;letter-spacing:-0.4px">50</span><span class="a" style="left:354.2px;top:12px;font-size:12px;letter-spacing:-0.4px">60</span><span class="a" style="left:405.2px;top:12px;font-size:12px;letter-spacing:-0.4px">70</span><span class="a" style="left:456.2px;top:12px;font-size:12px;letter-spacing:-0.4px">80</span><span class="a" style="left:507.2px;top:12px;font-size:12px;letter-spacing:-0.4px">90</span><span class="a" style="left:555.0px;top:12px;font-size:12px;letter-spacing:-0.4px">100</span>
  <div class="a" style="left:50.5px;top:0px;width:8px;height:25px;background:rgba(120,170,230,.62);border:1px solid #4878b8"></div><div class="a" style="left:54px;top:1px;width:1px;height:23px;background:rgba(40,70,120,.5)"></div>
  <svg class="a" style="left:14px;top:5px" width="18" height="17" id="ico-track"><rect x="0.5" y="0.5" width="16" height="4.5" fill="#000" stroke="#000"/><path d="M2 3.3 q2.5 -2 5 0 h3 q2 1 5 -.5" fill="none" stroke="#fff" stroke-width=".9"/><path d="M4 12 V7 M2 9 L4 7 L6 9 M13 7 V12 M11 10 L13 12 L15 10" fill="none" stroke="#000" stroke-width="1.1"/><rect x="0.5" y="13.5" width="16" height="2" fill="#000" stroke="#000"/><path d="M2 14.5 H8 M10 14.5 H15" stroke="#fff" stroke-width=".8"/></svg>
 </div>
 <!-- status -->
 <div class="a" style="left:3px;top:48px;width:35px;height:21px;background:#dcbcbc;border:1px solid;border-color:#808080 #f0f0f0 #f0f0f0 #808080"></div>
 <div class="a" style="left:3px;top:71px;width:35px;height:22px;background:#fff;border:1px solid;border-color:#808080 #f0f0f0 #f0f0f0 #808080"><div class="a" style="left:10px;top:9px;width:1px;height:2px;background:#4060e0"></div></div>
 <div class="a" style="left:41px;top:47px;width:3px;height:49px;border-left:1px solid #f0f0f0;border-right:1px solid #909090"></div>
 <div class="a" style="left:47px;top:49px;width:49px;height:21px;border:1px solid;border-color:#808080 #f0f0f0 #f0f0f0 #808080;overflow:hidden"><span class="a" style="left:5px;top:3px;font-size:11.5px;letter-spacing:-0.4px;white-space:nowrap">None Se</span></div>
 <svg class="a" style="left:104px;top:52px" width="11" height="13"><path d="M2.5 6 V3.5 a3 3 0 0 1 6 0 V6" fill="none" stroke="#7c7c7c" stroke-width="1.5"/><rect x="1" y="6" width="9" height="6.5" fill="#868686"/><path d="M1 8 H10 M1 10.5 H10" stroke="#b4b4b4" stroke-width=".8"/></svg>
 <svg class="a" style="left:129px;top:51px" width="16" height="16"><rect x="0.5" y="0.5" width="15" height="15" fill="#d8d8d8" stroke="#000"/><path d="M8 1 V15 M1 8 H15" stroke="#000" stroke-width=".8"/><circle cx="8" cy="8" r="2.2" fill="#000"/></svg>
 <span class="a" style="left:152px;top:53px;font-size:12px;letter-spacing:-0.3px">X:</span>
 <div class="a" style="left:163px;top:49px;width:56px;height:21px;background:#e0e0e0;border:1px solid;border-color:#202020 #f4f4f4 #f4f4f4 #202020;border-top-width:2px;border-left-width:2px"></div>
 <span class="a" style="left:233px;top:53px;font-size:12px;letter-spacing:-0.3px">Y:</span>
 <div class="a" style="left:245px;top:49px;width:56px;height:21px;background:#e0e0e0;border:1px solid;border-color:#202020 #f4f4f4 #f4f4f4 #202020;border-top-width:2px;border-left-width:2px"></div>
 <span class="a" style="left:316px;top:53px;font-size:12px;letter-spacing:-0.3px">Z:</span>
 <div class="a" style="left:327px;top:49px;width:56px;height:21px;background:#e0e0e0;border:1px solid;border-color:#202020 #f4f4f4 #f4f4f4 #202020;border-top-width:2px;border-left-width:2px"></div>
 <div class="a" style="left:47px;top:74px;width:313px;height:22px;border:1px solid;border-color:#808080 #f0f0f0 #f0f0f0 #808080"><span class="a t11" style="left:5px;top:4px;font-size:11px;letter-spacing:-0.15px">Click or click-and-drag to select objects</span></div>
 <div class="a btn" style="left:360px;top:48px;width:43px;height:44px;border-color:#f4f4f4 #707070 #707070 #f4f4f4"><svg class="a" style="left:9px;top:14.5px" width="26" height="12"><circle cx="5" cy="6" r="3.8" fill="none" stroke="#000" stroke-width="2"/><path d="M9 5.5 H24 M19 6 V10 M22.5 6 V10" stroke="#000" stroke-width="2.2" fill="none"/></svg></div>
 <div class="a btn" style="left:406px;top:48px;width:48px;height:22px;font-size:12px;line-height:22px;letter-spacing:-0.55px">Auto Key</div>
 <div class="a btn" style="left:406px;top:71px;width:48px;height:21px;font-size:12px;line-height:21px;letter-spacing:-0.55px">Set Key</div>
 <div class="a" style="left:457px;top:48px;width:115px;height:22px;background:#e0e0e0;border:2px solid;border-color:#6a6a6a #f8f8f8 #f8f8f8 #6a6a6a"><span class="a" style="left:2px;top:2px;font-size:12px;letter-spacing:-0.5px">Selected</span>
  <div class="a" style="left:96px;top:0px;width:15px;height:17px;background:#ececec;border:1px solid;border-color:#fff #707070 #707070 #fff"><div class="a" style="left:3px;top:6px;border:4px solid transparent;border-top:4px solid #000;border-bottom:0"></div></div></div>
 <svg class="a" style="left:459px;top:74px" width="20" height="18"><path d="M3 3 H8 M11 14 H16" stroke="#7070e0" stroke-width="1"/><path d="M1 12 L5 3 L12 14 L16 4" fill="none" stroke="#d03030" stroke-width="1.4"/><path d="M19.5 14 V17.5 H16 Z" fill="#000"/><path d="M16 17.5 L19.5 14" stroke="#fff" stroke-width=".8"/></svg>
 <div class="a btn" style="left:483px;top:72px;width:90px;height:21px;font-size:11.5px;line-height:21px;letter-spacing:-0.45px;padding-left:3px">Key Filters...</div>
 <div id="play" class="a" style="left:575px;top:46px;width:227px;height:50px">
<svg class="a" style="left:0;top:0" width="227" height="50">
 <!-- row1 -->
 <g fill="#000">
  <rect x="6" y="8" width="2" height="9"/><path d="M8 12.5 L14 8.5 V16.5 Z M14 12.5 L22 8.5 V16.5 Z"/>
  <path d="M34 12.5 L41 8.5 V16.5 Z"/><rect x="42" y="8.5" width="2" height="8"/><rect x="45" y="8.5" width="2" height="8"/>
  <rect x="55.5" y="5.5" width="15" height="14" fill="#d4d4d4" stroke="#000" stroke-width="1.6"/><path d="M59.5 9 L67 12.5 L59.5 16 Z"/>
  <path d="M71 18 v3.5 h-3.5 z" fill="#000"/>
  <rect x="79" y="8.5" width="2" height="8"/><rect x="82" y="8.5" width="2" height="8"/><path d="M85 8.5 L92 12.5 L85 16.5 Z"/>
  <path d="M104 8.5 L112 12.5 L104 16.5 Z M112 8.5 L118 12.5 L112 16.5 Z"/><rect x="118" y="8" width="2" height="9"/>
 </g>
 <g stroke="#808080"><path d="M27.5 5 V21 M99.5 5 V21 M128.5 5 V21 M128.5 27 V43"/></g>
 <g stroke="#f0f0f0"><path d="M28.5 5 V21 M100.5 5 V21 M129.5 5 V21 M129.5 27 V43"/></g>
 <!-- row2 -->
 <g fill="#000"><rect x="8" y="30" width="1.5" height="8"/><path d="M9.5 34 L13 31 V37 Z M19 34 L15.5 31 V37 Z"/><rect x="13" y="33.3" width="3" height="1.4"/><rect x="19" y="30" width="1.5" height="8"/></g>
 <!-- clock -->
 <g><rect x="109.5" y="28.5" width="11" height="10" fill="#e8e8e8" stroke="#000"/><rect x="109.5" y="28.5" width="11" height="2.5" fill="#fff" stroke="#000"/><circle cx="118" cy="36" r="4.5" fill="#f4d8d8" stroke="#c02020" stroke-width="1.3"/><path d="M118 33 V36 H120.5" stroke="#c02020" fill="none"/></g>
 <!-- nav icons row1 -->
 <g id="nav">
<circle cx="139.5" cy="10" r="4.4" fill="#dcdce4" stroke="#202078" stroke-width="1.4"/><path d="M139.5 7.3 a2.7 2.7 0 0 0 -2.6 2" stroke="#fff" fill="none"/><path d="M142.8 13.6 L147.6 19" stroke="#2828c8" stroke-width="2.6"/>
<rect x="159.5" y="5.5" width="12.5" height="10.5" fill="none" stroke="#981818" stroke-width="1.3"/><path d="M165.8 5.5 V16 M159.5 10.8 H172" stroke="#981818" stroke-width="1.2"/><circle cx="160.3" cy="14" r="3.7" fill="#dcdce4" stroke="#202078" stroke-width="1.3"/><path d="M163 17 L166.5 20.5" stroke="#2828c8" stroke-width="2.2"/>
<path d="M179.5 8.5 V5.5 H183 M191 5.5 H194.5 V8.5 M194.5 17 V20.5 H191 M183 20.5 H179.5 V17" fill="none" stroke="#000" stroke-width="1.3"/><rect x="181.5" y="9.5" width="8.5" height="8.5" fill="#d0d0d4" stroke="#181880" stroke-width="1.2"/><path d="M181.5 9.5 L184 7 H192.5 V15.5 L190 18 M190 9.5 L192.5 7" fill="none" stroke="#181880" stroke-width="1.1"/><path d="M190.5 10 L192 8 V15.5 L190.5 17.5 Z" fill="#606068"/>
<rect x="205.5" y="5.5" width="12" height="10" fill="none" stroke="#981818" stroke-width="1.3"/><path d="M211.5 5.5 V15.5 M205.5 10.5 H217.5" stroke="#981818" stroke-width="1.2"/><rect x="202.5" y="12.5" width="7" height="7.5" fill="#d4d4dc" stroke="#181880" stroke-width="1.2"/><path d="M202.5 12.5 L205 10.5 H211.5 V17.5 L209.5 20 M209.5 12.5 L211.5 10.5" fill="none" stroke="#181880" stroke-width="1.1"/>
<path d="M197 18.5 V22 H193.5 Z" fill="#000"/><path d="M193.5 22 L197 18.5" stroke="#fff" stroke-width=".8"/><path d="M220 18.5 V22 H216.5 Z" fill="#000"/><path d="M216.5 22 L220 18.5" stroke="#fff" stroke-width=".8"/>
<rect x="133.5" y="27.5" width="15" height="14" fill="#dcdcdc" stroke="#000" stroke-width="1.2" stroke-dasharray="2 1"/><circle cx="138.5" cy="33" r="3.6" fill="#c8c8d0" stroke="#181870" stroke-width="1.3"/><path d="M141 36 L145 40" stroke="#2020b0" stroke-width="2.3"/>
<path d="M151.5 41.0 V44.5 H148.0 Z" fill="#000"/><path d="M148.0 44.5 L151.5 41.0" stroke="#fff" stroke-width=".8"/><path d="M174.5 41.0 V44.5 H171.0 Z" fill="#000"/><path d="M171.0 44.5 L174.5 41.0" stroke="#fff" stroke-width=".8"/><path d="M197.5 41.0 V44.5 H194.0 Z" fill="#000"/><path d="M194.0 44.5 L197.5 41.0" stroke="#fff" stroke-width=".8"/>
<g fill="#e8e8e8" stroke="#000" stroke-width="1.2"><path d="M160.5 27.5 C163.5 27.5 164 31 163.5 33.5 C163 36 158.5 36.5 157.8 33.5 C157.3 31 158 27.5 160.5 27.5 Z M168 27.5 C165 27.5 164.8 31 165.2 33.5 C165.7 36 170.3 36.5 171 33.5 C171.5 31 170.5 27.5 168 27.5 Z"/><path d="M158 38 H163.5 C163.5 41 162 42.5 160.8 42.5 C159.5 42.5 158 41 158 38 Z M165.3 38 H170.8 C170.8 41 169.3 42.5 168 42.5 C166.8 42.5 165.3 41 165.3 38 Z"/></g>
<circle cx="186" cy="35.5" r="5" fill="none" stroke="#000" stroke-width="1.1"/><path d="M186 35.5 V28 M186 35.5 H194 M186 35.5 L180 41" stroke="#181890" stroke-width="1.2" fill="none"/><path d="M184 29.5 L186 26.5 L188 29.5 Z M192.5 33.5 L195.5 35.5 L192.5 37.5 Z M179 39.5 L182.5 41 L179.3 42.5 Z" fill="#000"/>
<rect x="210.5" y="34.5" width="7.5" height="7" fill="#d4d4d4" stroke="#000" stroke-width="1.3"/><rect x="203.5" y="27.5" width="11.5" height="11.5" fill="#d4d4dc" stroke="#181890" stroke-width="1.4"/><path d="M206 30 L212 36" stroke="#000" stroke-width=".9" stroke-dasharray="1.5 1"/><path d="M206 33 V30 H209" stroke="#000" fill="none" stroke-width="1"/>
</g>
</svg>
 <div class="a" style="left:30px;top:25px;width:63px;height:20px;background:#e0e0e0;border:2px solid;border-color:#404040 #f8f8f8 #f8f8f8 #404040"><span class="a" style="left:3px;top:1px;font-size:12px">0</span></div>
 <svg class="a" style="left:94px;top:27px" width="10" height="17"><rect x="0.5" y="0.5" width="9" height="7.5" fill="#d4d4d4" stroke="#fff"/><rect x="0.5" y="8.5" width="9" height="7.5" fill="#d4d4d4" stroke="#fff"/><path d="M2.5 6 L5 3 L7.5 6 Z M2.5 11 L5 14 L7.5 11 Z" fill="#000"/></svg>
</div>
</div>
<!-- DIALOG -->
<div id="dlg" class="a" style="left:34px;top:124px;width:409px;height:249px;z-index:5">
 <div class="lite"></div><div class="a" style="left:402px;top:30px;width:6px;height:49px;background:linear-gradient(180deg,rgba(255,255,255,0) 0,rgba(255,255,255,.35) 50%,rgba(255,255,255,.85) 85%,rgba(255,255,255,.9) 100%)"></div><div class="a" style="left:402px;top:172px;width:6px;height:18px;background:linear-gradient(180deg,rgba(90,150,240,0),rgba(90,150,240,.7) 50%,rgba(90,150,240,0))"></div><div class="a" style="left:-1px;top:84px;width:1px;height:158px;background:#9cd0dc"></div>
 <div class="glass"><div class="a" style="left:80px;top:-8px;width:80px;height:30px;background:radial-gradient(ellipse,rgba(120,170,235,.45),rgba(120,170,235,0) 70%)"></div>
 <div class="a" style="left:60px;top:-20px;width:40px;height:70px;background:rgba(255,255,255,.18);transform:skewX(-35deg)"></div><div class="a" style="left:200px;top:-20px;width:25px;height:70px;background:rgba(255,255,255,.10);transform:skewX(-35deg)"></div></div>
 <!-- app icon -->
 <svg class="a" style="left:6px;top:4px" width="17" height="17"><defs><linearGradient id="gi" x1="0" y1="0" x2="0" y2="1"><stop offset="0" stop-color="#3a8a88"/><stop offset="1" stop-color="#0c4444"/></linearGradient></defs><rect x=".5" y=".5" width="16" height="16" rx="2.5" fill="url(#gi)" stroke="#0a3c3c"/><path d="M12.5 5 C9 2.5 3.5 4.5 4 8.5 C4.5 12.5 10 13.5 12.5 10.5 C13.5 9 12 7.5 10 8 " fill="none" stroke="#e8fcfc" stroke-width="1.8"/><path d="M7 8.5 C8 7 10 7 11 8" fill="none" stroke="#e8fcfc" stroke-width="1.2"/></svg>
 <div class="a" style="left:28px;top:5px;font-size:12.500px;letter-spacing:-0.15px;white-space:nowrap;color:#101018;text-shadow:0 0 6px #fff,0 0 6px #fff,0 0 9px #fff,0 0 3px #fff">Layer: 0 (default)</div>
 <!-- caption buttons -->
 <div class="a" style="left:334px;top:-1px;width:69px;height:18px;border:1px solid #3a4a50;border-top:0;border-radius:0 0 5px 5px;overflow:hidden;box-shadow:0 0 0 1px rgba(255,255,255,.55)">
   <div class="a" style="left:0;top:0;width:25px;height:17px;background:linear-gradient(#c0d2d6 0,#9ab4ba 45%,#64909a 50%,#86aab2 100%);border-right:1px solid #3a4a50"></div>
   <div class="a" style="left:25px;top:0;width:44px;height:17px;background:linear-gradient(#e4aa9c 0,#d48070 45%,#b83820 52%,#cc6048 100%)"></div>
   <span class="a" style="left:7px;top:-1px;font-size:16px;font-weight:bold;color:#fff;text-shadow:0 0 2px #203038,0 0 2px #203038,0 0 1px #203038">?</span>
   <svg class="a" style="left:38px;top:3px" width="16" height="12"><path d="M2 1.5 H5.5 L8 4 L10.5 1.5 H14 L10 6 L14 10.5 H10.5 L8 8 L5.5 10.5 H2 L6 6 Z" fill="#fff" stroke="#503030" stroke-width=".9"/></svg>
 </div>
 <div class="client"><div>
  <!-- dialog toolbar icons: coords relative to client inner (abs 41,151) -->
  <svg class="a" style="left:0;top:0" width="394" height="26">
   <g transform="translate(17,7)"><g fill="#fff" stroke="#000" stroke-width="1.2"><path d="M1 10.5 L6 9 L12 11 L7 13 Z"/><path d="M1 7.5 L6 6 L12 8 L7 10 Z"/><path d="M1 4.5 L6 3 L12 5 L7 7 Z"/></g><path d="M3 0 L4.5 2.5 M7 -1 V2 M10.5 0 L9.5 2.5 M13 2.5 L11.5 4" stroke="#555" stroke-width=".8"/></g>
   <path d="M49.5 8.5 L58.5 17.5 M58.5 8.5 L49.5 17.5" stroke="#a2a2a2" stroke-width="1.4"/>
   <path d="M84.5 7.5 V18.5 M79 13 H90" stroke="#a4a4a4" stroke-width="2"/>
   <path d="M111.5 6.5 V17 L114 14.5 L116 19 L117.5 18.3 L115.5 14 H118.5 Z" fill="#fff" stroke="#000" stroke-width="1"/>
   <text x="139" y="19" font-family="Liberation Sans" font-weight="bold" font-size="15" fill="#a8a8a8">?</text>
  </svg>
  <svg class="a" style="left:167px;top:7px" width="14" height="9"><path d="M0.5 4.5 C0.5 1.5 3 0.5 7 0.5 C11 0.5 13.5 1.5 13.5 4.5 C13.5 7.5 11.5 8.5 10 8.5 C8.5 8.5 8 7 7 7 C6 7 5.5 8.5 4 8.5 C2.5 8.5 0.5 7.5 0.5 4.5 Z" fill="#000"/><ellipse cx="4.2" cy="4.8" rx="1.6" ry="1.35" fill="#fff"/><ellipse cx="9.8" cy="4.8" rx="1.6" ry="1.35" fill="#fff"/></svg><div class="a" style="left:172px;top:18px;width:9px;height:2px;background:#606060"></div>
  <svg class="a" style="left:196px;top:5px" width="13" height="13"><g stroke="#3434e4" stroke-width="1.2" fill="none"><path d="M6.5 0.5 V12.5 M0.5 6.5 H12.5" stroke-dasharray="2.2 .6"/><path d="M2.2 2.2 L10.8 10.8 M10.8 2.2 L2.2 10.8" stroke-dasharray="1.6 .7"/><path d="M4.8 2 L6.5 3.4 L8.2 2 M4.8 11 L6.5 9.6 L8.2 11 M2 4.8 L3.4 6.5 L2 8.2 M11 4.8 L9.6 6.5 L11 8.2" stroke-width="1"/></g><circle cx="6.5" cy="6.5" r="1.5" fill="#3434e4"/></svg><div class="a" style="left:202px;top:18px;width:8px;height:2px;background:#606060"></div>
  <!-- list -->
  <div id="list" class="a" style="left:9px;top:27px;width:375px;height:176px;background:#fff;border:1px solid;border-color:#808080 #f4f4f4 #f4f4f4 #808080">
   <div class="a" style="left:0px;top:0px;width:373px;height:174px;overflow:hidden"><div class="hdr" style="left:0px;width:140px;text-align:left;padding-left:5px">Layers</div><div class="hdr" style="left:140px;width:16px"></div><div class="hdr" style="left:156px;width:34px">Hide</div><div class="hdr" style="left:190px;width:45px">Freeze</div><div class="hdr" style="left:235px;width:47px">Render</div><div class="hdr" style="left:282px;width:35px">Color</div><div class="hdr" style="left:317px;width:55px">Radiosity</div><div class="a" style="left:0;top:17px;width:372px;height:1px;background:#e8e8e8"></div><div class="row" style="top:18px;background:#e0e0e0"><div class="a" style="left:3px;top:2px;width:9px;height:9px;border:1px solid #909090"></div><div class="a" style="left:5px;top:6px;width:5px;height:1px;background:#606060"></div><svg class="a" style="left:17px;top:1px" width="13" height="12" viewBox="0 0 15 13"><g fill="#fff" stroke="#000" stroke-width="1.3"><path d="M1 9.5 L6 8 L13.5 10 L8 12 Z"/><path d="M1 6.5 L6 5 L13.5 7 L8 9 Z"/><path d="M1 3.5 L6 2 L13.5 4 L8 6 Z"/></g></svg><span style="left:34px">0 (default)</span><svg class="a" style="left:143px;top:1px" width="14" height="11"><path d="M0.8 5.5 L4.3 9.3 L12.6 1" fill="none" stroke="#000" stroke-width="1.4"/></svg><div class="a" style="left:166.5px;top:7px;width:11.5px;height:3px;background:#8a8a8a;border-radius:1.5px"></div><div class="a" style="left:205.5px;top:7px;width:11.5px;height:3px;background:#8a8a8a;border-radius:1.5px"></div><svg class="a" style="left:249px;top:3px" width="17" height="12"><ellipse cx="8.5" cy="11" rx="5" ry="1.2" fill="#909090" opacity=".6"/><path d="M1 3.5 C2.5 3.5 3 6 4.5 7 M12.5 5 C15 3 16.5 4.5 15.5 6.5 C15 7.5 13.5 8 12.5 8" fill="none" stroke="#0a6a0a" stroke-width="1.4"/><ellipse cx="8.5" cy="6.8" rx="4.8" ry="3.8" fill="#18a018"/><ellipse cx="8.5" cy="3.6" rx="3.2" ry="1.2" fill="#0c7c0c"/><circle cx="8.5" cy="1.8" r="1" fill="#0c7c0c"/><ellipse cx="7" cy="5.8" rx="1.8" ry="1.2" fill="#60d860"/></svg><div class="a" style="left:294px;top:2px;width:10px;height:10px;background:#e8a0d8;border:1px solid #000"></div><svg class="a" style="left:337px;top:-1px" width="17" height="15"><path d="M2.3 14 L3.3 7.3 H6.6 L8.5 9.6 L10.4 7.3 H13.7 L14.7 14 Z" fill="#f8f000" stroke="#000" stroke-width="1"/><path d="M8.5 9.6 V1.5 M6 7 L2.3 3.5 M11 7 L14.7 3.5" fill="none" stroke="#000" stroke-width="1.1"/><path d="M6.4 3.6 L8.5 0.8 L10.6 3.6 M1.6 6.6 V3 H5.2 M11.8 3 H15.4 V6.6" fill="none" stroke="#000" stroke-width="1.1"/></svg></div><div class="row" style="top:34px;background:#e0e0e0"><div class="a" style="left:0;top:0px;width:140px;height:15px;background:#f0c850"></div><svg class="a" style="left:34px;top:1px" width="12" height="12" viewBox="0 0 13 14"><path d="M1 4 L6.5 1 L12 4 V10 L6.5 13 L1 10 Z" fill="#f4f4f4" stroke="#000" stroke-width="1.25"/><path d="M1 4 L6.5 7 L12 4 M6.5 7 V13" fill="none" stroke="#000" stroke-width="1.25"/><path d="M7.3 7.7 L11.2 5.4 V9.6 L7.3 11.9 Z" fill="#909090"/></svg><span style="left:50px">Plano</span><svg class="a" style="left:204.5px;top:2px" width="13" height="13"><g stroke="#3434e4" stroke-width="1.2" fill="none"><path d="M6.5 0.5 V12.5 M0.5 6.5 H12.5" stroke-dasharray="2.2 .6"/><path d="M2.2 2.2 L10.8 10.8 M10.8 2.2 L2.2 10.8" stroke-dasharray="1.6 .7"/><path d="M4.8 2 L6.5 3.4 L8.2 2 M4.8 11 L6.5 9.6 L8.2 11 M2 4.8 L3.4 6.5 L2 8.2 M11 4.8 L9.6 6.5 L11 8.2" stroke-width="1"/></g><circle cx="6.5" cy="6.5" r="1.5" fill="#3434e4"/></svg><div class="a" style="left:250.5px;top:7px;width:12px;height:3px;background:#8a8a8a;border-radius:1.5px"></div><div class="a" style="left:294px;top:2px;width:10px;height:10px;background:#103c8c;border:1px solid #000"></div><svg class="a" style="left:337px;top:-1px" width="17" height="15"><path d="M2.3 14 L3.3 7.3 H6.6 L8.5 9.6 L10.4 7.3 H13.7 L14.7 14 Z" fill="#f8f000" stroke="#000" stroke-width="1"/><path d="M8.5 9.6 V1.5 M6 7 L2.3 3.5 M11 7 L14.7 3.5" fill="none" stroke="#000" stroke-width="1.1"/><path d="M6.4 3.6 L8.5 0.8 L10.6 3.6 M1.6 6.6 V3 H5.2 M11.8 3 H15.4 V6.6" fill="none" stroke="#000" stroke-width="1.1"/></svg></div><div class="row" style="top:50px;background:#e0e0e0"><svg class="a" style="left:34px;top:1px" width="12" height="12" viewBox="0 0 13 14"><path d="M1 4 L6.5 1 L12 4 V10 L6.5 13 L1 10 Z" fill="#f4f4f4" stroke="#000" stroke-width="1.25"/><path d="M1 4 L6.5 7 L12 4 M6.5 7 V13" fill="none" stroke="#000" stroke-width="1.25"/><path d="M7.3 7.7 L11.2 5.4 V9.6 L7.3 11.9 Z" fill="#909090"/></svg><span style="left:50px">1_0256_Cubeta</span><div class="a" style="left:166.5px;top:7px;width:11.5px;height:3px;background:#8a8a8a;border-radius:1.5px"></div><div class="a" style="left:205.5px;top:7px;width:11.5px;height:3px;background:#8a8a8a;border-radius:1.5px"></div><svg class="a" style="left:249px;top:3px" width="17" height="12"><ellipse cx="8.5" cy="11" rx="5" ry="1.2" fill="#909090" opacity=".6"/><path d="M1 3.5 C2.5 3.5 3 6 4.5 7 M12.5 5 C15 3 16.5 4.5 15.5 6.5 C15 7.5 13.5 8 12.5 8" fill="none" stroke="#0a6a0a" stroke-width="1.4"/><ellipse cx="8.5" cy="6.8" rx="4.8" ry="3.8" fill="#18a018"/><ellipse cx="8.5" cy="3.6" rx="3.2" ry="1.2" fill="#0c7c0c"/><circle cx="8.5" cy="1.8" r="1" fill="#0c7c0c"/><ellipse cx="7" cy="5.8" rx="1.8" ry="1.2" fill="#60d860"/></svg><div class="a" style="left:294px;top:2px;width:10px;height:10px;background:#5a92e2;border:1px solid #000"></div><svg class="a" style="left:337px;top:-1px" width="17" height="15"><path d="M2.3 14 L3.3 7.3 H6.6 L8.5 9.6 L10.4 7.3 H13.7 L14.7 14 Z" fill="#f8f000" stroke="#000" stroke-width="1"/><path d="M8.5 9.6 V1.5 M6 7 L2.3 3.5 M11 7 L14.7 3.5" fill="none" stroke="#000" stroke-width="1.1"/><path d="M6.4 3.6 L8.5 0.8 L10.6 3.6 M1.6 6.6 V3 H5.2 M11.8 3 H15.4 V6.6" fill="none" stroke="#000" stroke-width="1.1"/></svg></div><div class="row" style="top:66px;background:#e0e0e0"><svg class="a" style="left:34px;top:1px" width="12" height="12" viewBox="0 0 13 14"><path d="M1 4 L6.5 1 L12 4 V10 L6.5 13 L1 10 Z" fill="#f4f4f4" stroke="#000" stroke-width="1.25"/><path d="M1 4 L6.5 7 L12 4 M6.5 7 V13" fill="none" stroke="#000" stroke-width="1.25"/><path d="M7.3 7.7 L11.2 5.4 V9.6 L7.3 11.9 Z" fill="#909090"/></svg><span style="left:50px">2_1250_Base</span><svg class="a" style="left:166px;top:4px" width="14" height="9"><path d="M0.5 4.5 C0.5 1.5 3 0.5 7 0.5 C11 0.5 13.5 1.5 13.5 4.5 C13.5 7.5 11.5 8.5 10 8.5 C8.5 8.5 8 7 7 7 C6 7 5.5 8.5 4 8.5 C2.5 8.5 0.5 7.5 0.5 4.5 Z" fill="#000"/><ellipse cx="4.2" cy="4.8" rx="1.6" ry="1.35" fill="#fff"/><ellipse cx="9.8" cy="4.8" rx="1.6" ry="1.35" fill="#fff"/></svg><div class="a" style="left:205.5px;top:7px;width:11.5px;height:3px;background:#8a8a8a;border-radius:1.5px"></div><svg class="a" style="left:249px;top:3px" width="17" height="12"><ellipse cx="8.5" cy="11" rx="5" ry="1.2" fill="#909090" opacity=".6"/><path d="M1 3.5 C2.5 3.5 3 6 4.5 7 M12.5 5 C15 3 16.5 4.5 15.5 6.5 C15 7.5 13.5 8 12.5 8" fill="none" stroke="#0a6a0a" stroke-width="1.4"/><ellipse cx="8.5" cy="6.8" rx="4.8" ry="3.8" fill="#18a018"/><ellipse cx="8.5" cy="3.6" rx="3.2" ry="1.2" fill="#0c7c0c"/><circle cx="8.5" cy="1.8" r="1" fill="#0c7c0c"/><ellipse cx="7" cy="5.8" rx="1.8" ry="1.2" fill="#60d860"/></svg><div class="a" style="left:294px;top:2px;width:10px;height:10px;background:#5a92e2;border:1px solid #000"></div><svg class="a" style="left:337px;top:-1px" width="17" height="15"><path d="M2.3 14 L3.3 7.3 H6.6 L8.5 9.6 L10.4 7.3 H13.7 L14.7 14 Z" fill="#f8f000" stroke="#000" stroke-width="1"/><path d="M8.5 9.6 V1.5 M6 7 L2.3 3.5 M11 7 L14.7 3.5" fill="none" stroke="#000" stroke-width="1.1"/><path d="M6.4 3.6 L8.5 0.8 L10.6 3.6 M1.6 6.6 V3 H5.2 M11.8 3 H15.4 V6.6" fill="none" stroke="#000" stroke-width="1.1"/></svg></div><div class="row" style="top:82px;background:#e0e0e0"><svg class="a" style="left:34px;top:1px" width="12" height="12" viewBox="0 0 13 14"><path d="M1 4 L6.5 1 L12 4 V10 L6.5 13 L1 10 Z" fill="#f4f4f4" stroke="#000" stroke-width="1.25"/><path d="M1 4 L6.5 7 L12 4 M6.5 7 V13" fill="none" stroke="#000" stroke-width="1.25"/><path d="M7.3 7.7 L11.2 5.4 V9.6 L7.3 11.9 Z" fill="#909090"/></svg><span style="left:50px">1_0256_Sombra_B</span><svg class="a" style="left:166px;top:4px" width="14" height="9"><path d="M0.5 4.5 C0.5 1.5 3 0.5 7 0.5 C11 0.5 13.5 1.5 13.5 4.5 C13.5 7.5 11.5 8.5 10 8.5 C8.5 8.5 8 7 7 7 C6 7 5.5 8.5 4 8.5 C2.5 8.5 0.5 7.5 0.5 4.5 Z" fill="#000"/><ellipse cx="4.2" cy="4.8" rx="1.6" ry="1.35" fill="#fff"/><ellipse cx="9.8" cy="4.8" rx="1.6" ry="1.35" fill="#fff"/></svg><div class="a" style="left:205.5px;top:7px;width:11.5px;height:3px;background:#8a8a8a;border-radius:1.5px"></div><svg class="a" style="left:249px;top:3px" width="17" height="12"><ellipse cx="8.5" cy="11" rx="5" ry="1.2" fill="#909090" opacity=".6"/><path d="M1 3.5 C2.5 3.5 3 6 4.5 7 M12.5 5 C15 3 16.5 4.5 15.5 6.5 C15 7.5 13.5 8 12.5 8" fill="none" stroke="#0a6a0a" stroke-width="1.4"/><ellipse cx="8.5" cy="6.8" rx="4.8" ry="3.8" fill="#18a018"/><ellipse cx="8.5" cy="3.6" rx="3.2" ry="1.2" fill="#0c7c0c"/><circle cx="8.5" cy="1.8" r="1" fill="#0c7c0c"/><ellipse cx="7" cy="5.8" rx="1.8" ry="1.2" fill="#60d860"/></svg><div class="a" style="left:294px;top:2px;width:10px;height:10px;background:#5a92e2;border:1px solid #000"></div><svg class="a" style="left:337px;top:-1px" width="17" height="15"><path d="M2.3 14 L3.3 7.3 H6.6 L8.5 9.6 L10.4 7.3 H13.7 L14.7 14 Z" fill="#f8f000" stroke="#000" stroke-width="1"/><path d="M8.5 9.6 V1.5 M6 7 L2.3 3.5 M11 7 L14.7 3.5" fill="none" stroke="#000" stroke-width="1.1"/><path d="M6.4 3.6 L8.5 0.8 L10.6 3.6 M1.6 6.6 V3 H5.2 M11.8 3 H15.4 V6.6" fill="none" stroke="#000" stroke-width="1.1"/></svg></div><div class="row" style="top:98px;background:#e0e0e0"><svg class="a" style="left:34px;top:1px" width="12" height="12" viewBox="0 0 13 14"><path d="M1 4 L6.5 1 L12 4 V10 L6.5 13 L1 10 Z" fill="#f4f4f4" stroke="#000" stroke-width="1.25"/><path d="M1 4 L6.5 7 L12 4 M6.5 7 V13" fill="none" stroke="#000" stroke-width="1.25"/><path d="M7.3 7.7 L11.2 5.4 V9.6 L7.3 11.9 Z" fill="#909090"/></svg><span style="left:50px">1_0256_Base</span><div class="a" style="left:166.5px;top:7px;width:11.5px;height:3px;background:#8a8a8a;border-radius:1.5px"></div><div class="a" style="left:205.5px;top:7px;width:11.5px;height:3px;background:#8a8a8a;border-radius:1.5px"></div><svg class="a" style="left:249px;top:3px" width="17" height="12"><ellipse cx="8.5" cy="11" rx="5" ry="1.2" fill="#909090" opacity=".6"/><path d="M1 3.5 C2.5 3.5 3 6 4.5 7 M12.5 5 C15 3 16.5 4.5 15.5 6.5 C15 7.5 13.5 8 12.5 8" fill="none" stroke="#0a6a0a" stroke-width="1.4"/><ellipse cx="8.5" cy="6.8" rx="4.8" ry="3.8" fill="#18a018"/><ellipse cx="8.5" cy="3.6" rx="3.2" ry="1.2" fill="#0c7c0c"/><circle cx="8.5" cy="1.8" r="1" fill="#0c7c0c"/><ellipse cx="7" cy="5.8" rx="1.8" ry="1.2" fill="#60d860"/></svg><div class="a" style="left:294px;top:2px;width:10px;height:10px;background:#5a92e2;border:1px solid #000"></div><svg class="a" style="left:337px;top:-1px" width="17" height="15"><path d="M2.3 14 L3.3 7.3 H6.6 L8.5 9.6 L10.4 7.3 H13.7 L14.7 14 Z" fill="#f8f000" stroke="#000" stroke-width="1"/><path d="M8.5 9.6 V1.5 M6 7 L2.3 3.5 M11 7 L14.7 3.5" fill="none" stroke="#000" stroke-width="1.1"/><path d="M6.4 3.6 L8.5 0.8 L10.6 3.6 M1.6 6.6 V3 H5.2 M11.8 3 H15.4 V6.6" fill="none" stroke="#000" stroke-width="1.1"/></svg></div></div>
  </div>
  <!-- red highlight box -->
  <div class="a" style="left:161px;top:57px;width:43px;height:25px;border:3px solid #f80404;border-radius:4.5px;background:#dfb0b0"><svg class="a" style="left:12px;top:5px" width="14" height="9"><path d="M0.5 4.5 C0.5 1.5 3 0.5 7 0.5 C11 0.5 13.5 1.5 13.5 4.5 C13.5 7.5 11.5 8.5 10 8.5 C8.5 8.5 8 7 7 7 C6 7 5.5 8.5 4 8.5 C2.5 8.5 0.5 7.5 0.5 4.5 Z" fill="#400808"/><ellipse cx="4.2" cy="4.8" rx="1.6" ry="1.35" fill="#e8c0c0"/><ellipse cx="9.8" cy="4.8" rx="1.6" ry="1.35" fill="#e8c0c0"/></svg></div>
 </div></div>
</div>
</body></html>
